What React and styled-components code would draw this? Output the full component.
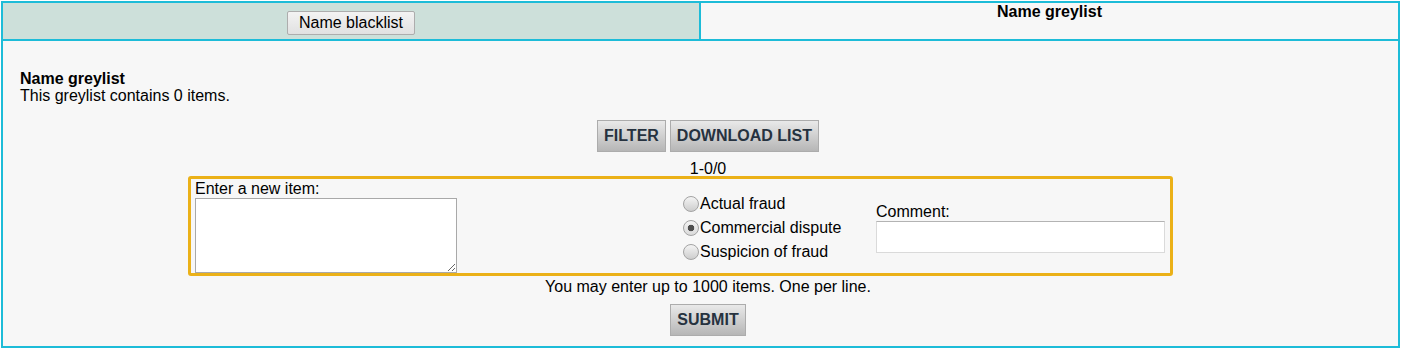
import React from 'react';
import styled, { createGlobalStyle } from 'styled-components';

const GlobalStyle = createGlobalStyle`
  html, body {
    margin: 0;
    padding: 0;
    background: #ffffff;
  }
  body {
    font-family: "Liberation Sans", Arial, sans-serif;
    font-size: 16px;
    color: #000;
  }
`;

// Colours
const cyan = '#1dbcd8';
const gold = '#ebb118';

const Page = styled.div`
  width: 1399px;
  padding: 1px 1px 0 1px;
`;

// Tabs
const TabBar = styled.div`
  display: grid;
  grid-template-columns: 696px 1fr;
  border: 2px solid ${cyan};
  height: 36px;
`;

const Tab = styled.div`
  display: flex;
  justify-content: center;
  align-items: flex-start;
  background: ${p => (p.active ? '#f7f7f7' : '#cde0da')};
  padding-top: ${p => (p.active ? '0' : '8px')};
  border-left: ${p => (p.active ? `2px solid ${cyan}` : 'none')};
  font-weight: ${p => (p.active ? 'bold' : 'normal')};
  line-height: 18px;
`;

const TabButton = styled.button`
  height: 24px;
  padding: 0 11px;
  font-family: inherit;
  font-size: 16px;
  color: #000;
  background: linear-gradient(#f3f3f3, #e1e1e1);
  border: 1px solid #adadad;
  border-radius: 2px;
  cursor: pointer;
`;

// Panel
const Panel = styled.div`
  background: #f7f7f7;
  border: 2px solid ${cyan};
  border-top: none;
  padding: 29px 0 10px 15px;
`;

const Heading = styled.div`
  padding-left: 2px;
  font-weight: bold;
  line-height: 17px;
`;

const Intro = styled.div`
  padding-left: 2px;
  line-height: 17px;
`;

const Row = styled.div`
  display: flex;
  justify-content: center;
  gap: 4px;
  margin-top: ${p => p.top || 0}px;
`;

const ActionButton = styled.button`
  height: 32px;
  padding: 0 6px;
  font-family: inherit;
  font-size: 16px;
  font-weight: bold;
  color: #26323f;
  background: linear-gradient(#e9e9e9, #b6b6b6);
  border: 1px solid #acacac;
  border-radius: 0;
  cursor: pointer;
`;

const Pager = styled.div`
  text-align: center;
  line-height: 18px;
  margin-top: 8px;
  margin-bottom: -2px;
`;

// New item box
const EntryBox = styled.div`
  display: grid;
  grid-template-columns: 488px 193px 289px;
  width: 970px;
  margin-left: 170px;
  padding: 0 5px 0 4px;
  border: 3px solid ${gold};
  border-radius: 3px;
`;

const Cell = styled.div`
  align-self: ${p => (p.middle ? 'center' : 'start')};
  margin-top: ${p => (p.middle ? '4px' : '0')};
`;

const FieldLabel = styled.label`
  display: block;
  line-height: 19px;
`;

const ItemsArea = styled.textarea`
  display: block;
  box-sizing: border-box;
  width: 262px;
  height: 75px;
  margin: 0;
  border: 1px solid #a9a9a9;
  background: #fff;
  font-family: inherit;
  font-size: 14px;
`;

const RadioRow = styled.label`
  display: flex;
  align-items: center;
  height: 24px;
  gap: 1px;
  white-space: nowrap;
`;

const Radio = styled.input.attrs({ type: 'radio' })`
  appearance: none;
  width: 16px;
  height: 16px;
  margin: 0;
  border: 1px solid #a3a3a3;
  border-radius: 50%;
  background: linear-gradient(#f4f4f4, #cdcdcd);
  box-sizing: border-box;
  &:checked {
    background: radial-gradient(circle, #4f4f4f 0 3px, transparent 3.6px),
      linear-gradient(#f4f4f4, #dadada);
  }
`;

const CommentLabel = styled.label`
  display: block;
  line-height: 18px;
`;

const CommentInput = styled.input`
  display: block;
  box-sizing: border-box;
  width: 289px;
  height: 32px;
  margin: 0;
  border: 1px solid #dadada;
  border-top-color: #b3b3b3;
  background: #fff;
  font-family: inherit;
  font-size: 16px;
`;

const Note = styled.div`
  text-align: center;
  line-height: 18px;
  margin-top: 2px;
`;

const reasons = ['Actual fraud', 'Commercial dispute', 'Suspicion of fraud'];

export default function App() {
  return (
    <Page>
      <GlobalStyle />
      <TabBar>
        <Tab>
          <TabButton>Name blacklist</TabButton>
        </Tab>
        <Tab active>Name greylist</Tab>
      </TabBar>
      <Panel>
        <Heading>Name greylist</Heading>
        <Intro>This greylist contains 0 items.</Intro>
        <Row top={16}>
          <ActionButton>FILTER</ActionButton>
          <ActionButton>DOWNLOAD LIST</ActionButton>
        </Row>
        <Pager>1-0/0</Pager>
        <EntryBox>
          <Cell>
            <FieldLabel htmlFor="items">Enter a new item:</FieldLabel>
            <ItemsArea id="items" />
          </Cell>
          <Cell middle>
            {reasons.map(r => (
              <RadioRow key={r}>
                <Radio name="reason" defaultChecked={r === 'Commercial dispute'} />
                {r}
              </RadioRow>
            ))}
          </Cell>
          <Cell middle>
            <CommentLabel htmlFor="comment">Comment:</CommentLabel>
            <CommentInput id="comment" type="text" />
          </Cell>
        </EntryBox>
        <Note>You may enter up to 1000 items. One per line.</Note>
        <Row top={8}>
          <ActionButton>SUBMIT</ActionButton>
        </Row>
      </Panel>
    </Page>
  );
}
